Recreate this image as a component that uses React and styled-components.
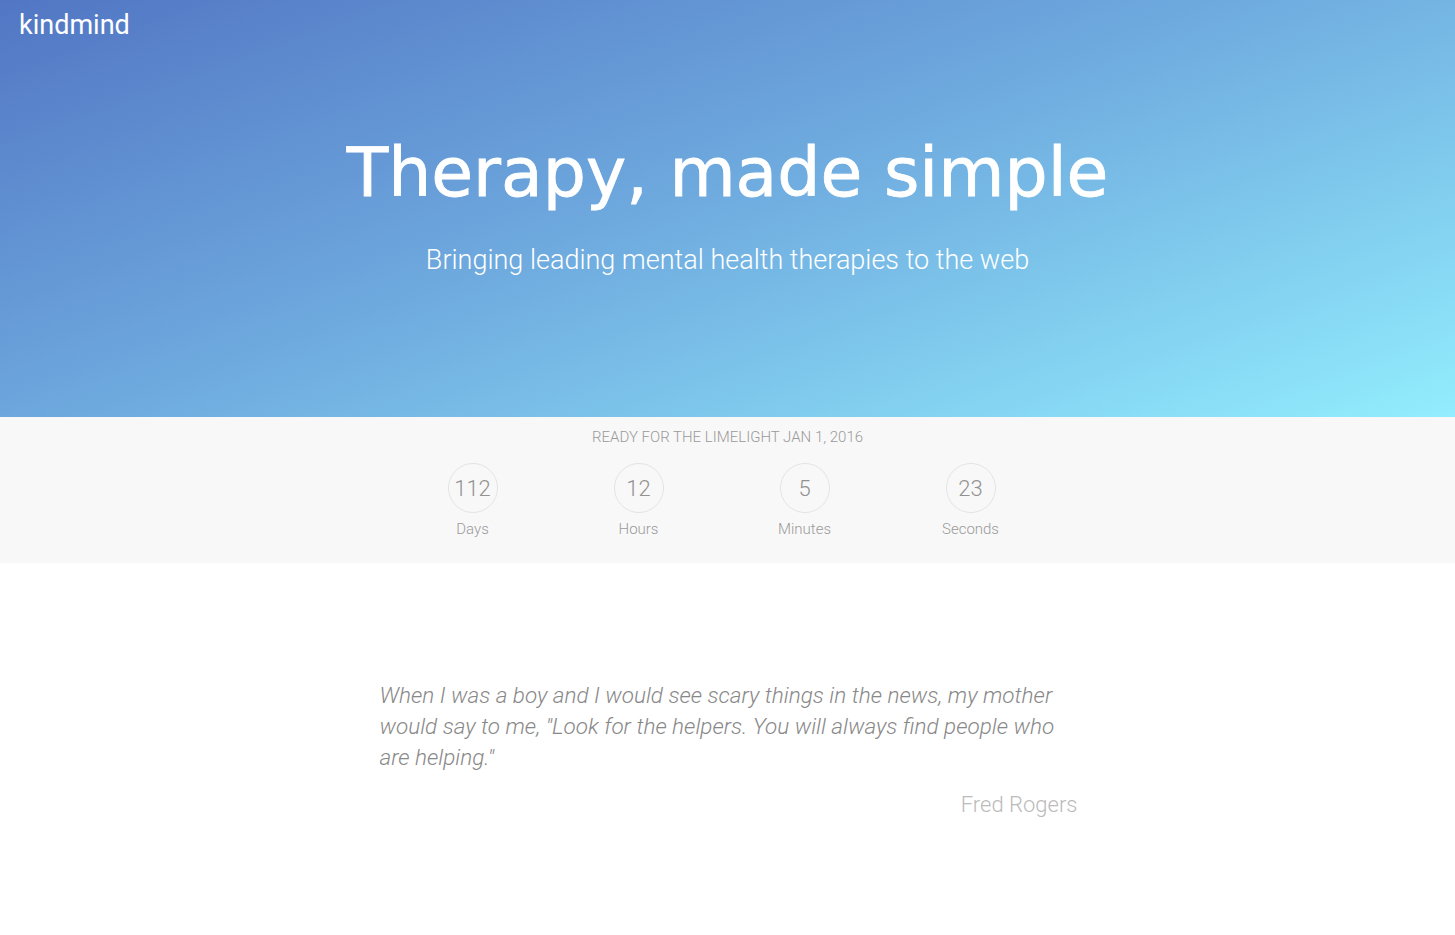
import React from "react";
import styled, { createGlobalStyle } from "styled-components";

const GlobalStyle = createGlobalStyle`
  body {
    margin: 0;
    background: #ffffff;
    font-family: Roboto, "Liberation Sans", sans-serif;
  }
`;

const Hero = styled.header`
  height: 417px;
  background: linear-gradient(160deg, #5276c4 0%, #70ade0 50%, #92edfd 100%);
  color: #ffffff;
  display: flex;
  flex-direction: column;
`;

const Logo = styled.div`
  font-family: Roboto, sans-serif;
  font-size: 27px;
  padding: 10px 0 0 19px;
  line-height: 30px;
`;

const Title = styled.h1`
  margin: 93px 0 0;
  text-align: center;
  font-family: "DejaVu Sans", sans-serif;
  font-weight: 400;
  font-size: 68px;
  line-height: 80px;
  letter-spacing: 0;
  -webkit-text-stroke: 0.8px #ffffff;
`;

const Subtitle = styled.p`
  margin: 31px 0 0;
  text-align: center;
  font-weight: 300;
  font-size: 27px;
  line-height: 32px;
`;

const Countdown = styled.section`
  background: #f8f8f8;
  height: 146px;
  display: flex;
  flex-direction: column;
  align-items: center;
  color: #9a9a9a;
`;

const Caption = styled.div`
  margin-top: 12px;
  font-size: 15px;
  font-weight: 300;
  line-height: 16px;
`;

const Units = styled.div`
  display: flex;
  margin: 18px 12px 0 0;
`;

const Unit = styled.div`
  width: 166px;
  display: flex;
  flex-direction: column;
  align-items: center;
`;

const Circle = styled.div`
  width: 48px;
  height: 48px;
  border: 1px solid #e4e4e4;
  border-radius: 50%;
  display: flex;
  align-items: center;
  justify-content: center;
  font-size: 22px;
  font-weight: 300;
  color: #929292;
`;

const Label = styled.div`
  margin-top: 7px;
  font-size: 15px;
  font-weight: 300;
`;

const QuoteBlock = styled.blockquote`
  width: 698px;
  margin: 117px 0 0 calc(50% - 348px);
  padding: 0;
`;

const QuoteText = styled.p`
  margin: 0;
  font-style: italic;
  font-weight: 300;
  font-size: 22.5px;
  line-height: 31px;
  color: #888888;
`;

const Author = styled.cite`
  display: block;
  margin-top: 19px;
  text-align: right;
  font-style: normal;
  font-weight: 300;
  font-size: 22px;
  color: #bbbbbb;
`;

const units = [
  { value: 112, label: "Days" },
  { value: 12, label: "Hours" },
  { value: 5, label: "Minutes" },
  { value: 23, label: "Seconds" },
];

export default function App() {
  return (
    <>
      <GlobalStyle />
      <Hero>
        <Logo>kindmind</Logo>
        <Title>Therapy, made simple</Title>
        <Subtitle>Bringing leading mental health therapies to the web</Subtitle>
      </Hero>
      <Countdown>
        <Caption>READY FOR THE LIMELIGHT JAN 1, 2016</Caption>
        <Units>
          {units.map((u) => (
            <Unit key={u.label}>
              <Circle>{u.value}</Circle>
              <Label>{u.label}</Label>
            </Unit>
          ))}
        </Units>
      </Countdown>
      <QuoteBlock>
        <QuoteText>
          When I was a boy and I would see scary things in the news, my mother
          would say to me, "Look for the helpers. You will always find people
          who are helping."
        </QuoteText>
        <Author>Fred Rogers</Author>
      </QuoteBlock>
    </>
  );
}
